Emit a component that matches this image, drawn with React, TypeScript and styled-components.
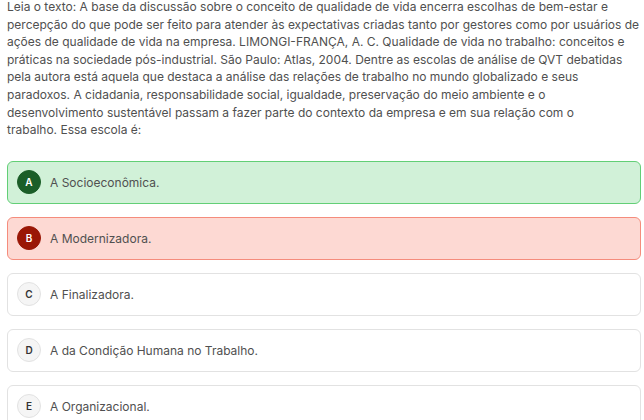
import React from "react";
import styled, { createGlobalStyle } from "styled-components";

const Global = createGlobalStyle`
  html, body { margin: 0; padding: 0; background: #ffffff; }
  body { font-family: Inter, "Noto Sans", sans-serif; -webkit-font-smoothing: antialiased; }
`;

const Page = styled.div`
  width: 634px;
  padding: 0 3px 0 7px;
  margin-top: -2px;
  display: flex;
  flex-direction: column;
`;

const Question = styled.p`
  margin: 0 0 22px 0;
  font-size: 12px;
  line-height: 17.6px;
  color: #505050;
`;

const Line = styled.span`
  display: block;
  white-space: nowrap;
`;

const List = styled.div`
  display: flex;
  flex-direction: column;
  gap: 13px;
`;

type Variant = "correct" | "wrong" | "neutral";

const palette: Record<Variant, { bg: string; border: string; badge: string; badgeBorder: string; letter: string }> = {
  correct: { bg: "#d1f1d8", border: "#62cf76", badge: "#1b5e28", badgeBorder: "#1b5e28", letter: "#ffffff" },
  wrong: { bg: "#fdd9d3", border: "#f58c7c", badge: "#9a1706", badgeBorder: "#9a1706", letter: "#ffffff" },
  neutral: { bg: "#ffffff", border: "#e2e2e2", badge: "#f5f5f5", badgeBorder: "#e2e2e2", letter: "#333333" },
};

const Option = styled.div<{ $v: Variant }>`
  box-sizing: border-box;
  height: 43px;
  display: flex;
  align-items: center;
  gap: 9px;
  padding: 0 9px;
  border-radius: 6px;
  border: 1px solid ${(p) => palette[p.$v].border};
  background: ${(p) => palette[p.$v].bg};
`;

const Badge = styled.span<{ $v: Variant }>`
  box-sizing: border-box;
  width: 24px;
  height: 24px;
  border-radius: 50%;
  flex: none;
  display: flex;
  align-items: center;
  justify-content: center;
  font-size: 10px;
  font-weight: 600;
  background: ${(p) => palette[p.$v].badge};
  border: 1px solid ${(p) => palette[p.$v].badgeBorder};
  color: ${(p) => palette[p.$v].letter};
`;

const Label = styled.span`
  font-size: 12px;
  color: #505050;
`;

const lines = [
  "Leia o texto: A base da discussão sobre o conceito de qualidade de vida encerra escolhas de bem-estar e",
  "percepção do que pode ser feito para atender às expectativas criadas tanto por gestores como por usuários de",
  "ações de qualidade de vida na empresa. LIMONGI-FRANÇA, A. C. Qualidade de vida no trabalho: conceitos e",
  "práticas na sociedade pós-industrial. São Paulo: Atlas, 2004. Dentre as escolas de análise de QVT debatidas",
  "pela autora está aquela que destaca a análise das relações de trabalho no mundo globalizado e seus",
  "paradoxos. A cidadania, responsabilidade social, igualdade, preservação do meio ambiente e o",
  "desenvolvimento sustentável passam a fazer parte do contexto da empresa e em sua relação com o",
  "trabalho. Essa escola é:",
];

const options: { letter: string; text: string; v: Variant }[] = [
  { letter: "A", text: "A Socioeconômica.", v: "correct" },
  { letter: "B", text: "A Modernizadora.", v: "wrong" },
  { letter: "C", text: "A Finalizadora.", v: "neutral" },
  { letter: "D", text: "A da Condição Humana no Trabalho.", v: "neutral" },
  { letter: "E", text: "A Organizacional.", v: "neutral" },
];

export default function App() {
  return (
    <>
      <Global />
      <Page>
        <Question>
          {lines.map((l, i) => (
            <Line key={i}>{l}</Line>
          ))}
        </Question>
        <List>
          {options.map((o) => (
            <Option key={o.letter} $v={o.v}>
              <Badge $v={o.v}>{o.letter}</Badge>
              <Label>{o.text}</Label>
            </Option>
          ))}
        </List>
      </Page>
    </>
  );
}
